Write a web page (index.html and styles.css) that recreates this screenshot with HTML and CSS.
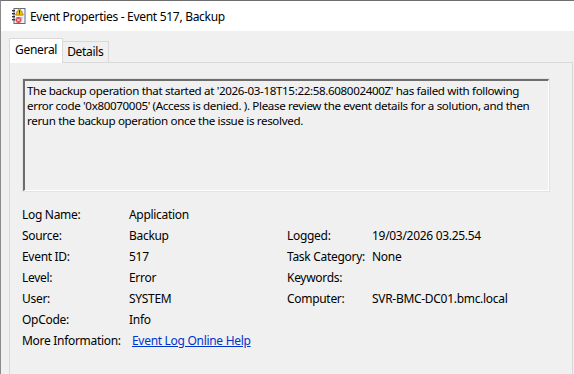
FILE: index.html
```html
<!DOCTYPE html>
<html lang="en">
<head>
  <meta charset="UTF-8" />
  <title>Event Properties - Event 517, Backup</title>
  <link rel="stylesheet" href="styles.css">
</head>
<body>
  <div class="window">
    <div class="titlebar">
      <svg class="app-icon" width="16" height="18" viewBox="0 0 16 18">
        <rect x="3" y="1.5" width="11" height="15" fill="#f4f4f8" stroke="#5a6a8a" />
        <line x1="5" y1="5" x2="12" y2="5" stroke="#9aa6c0" />
        <line x1="5" y1="8" x2="12" y2="8" stroke="#9aa6c0" />
        <line x1="5" y1="11" x2="12" y2="11" stroke="#9aa6c0" />
        <rect x="1" y="3" width="3" height="1.4" fill="#333" />
        <rect x="1" y="6" width="3" height="1.4" fill="#333" />
        <rect x="1" y="9" width="3" height="1.4" fill="#333" />
        <rect x="1" y="12" width="3" height="1.4" fill="#333" />
        <polygon points="8.5,1 12.5,8 4.5,8" fill="#f2c200" stroke="#a07800" stroke-width="0.6" />
        <rect x="8" y="3.2" width="1" height="2.6" fill="#222" />
        <rect x="8" y="6.3" width="1" height="1" fill="#222" />
        <circle cx="7.5" cy="13" r="3" fill="#d9434e" />
        <line x1="6" y1="11.5" x2="9" y2="14.5" stroke="#fff" stroke-width="1" />
        <line x1="9" y1="11.5" x2="6" y2="14.5" stroke="#fff" stroke-width="1" />
      </svg>
      <span class="title">Event Properties - Event 517, Backup</span>
    </div>

    <div class="body">
      <div class="tabs">
        <div class="tab active">General</div>
        <div class="tab">Details</div>
      </div>

      <div class="panel">
        <div class="message">The backup operation that started at '2026-03-18T15:22:58.608002400Z' has failed with following error code '0x80070005' (Access is denied. ). Please review the event details for a solution, and then rerun the backup operation once the issue is resolved.</div>

        <div class="props">
          <div class="label">Log Name:</div>
          <div class="value wide">Application</div>

          <div class="label">Source:</div>
          <div class="value">Backup</div>
          <div class="label">Logged:</div>
          <div class="value">19/03/2026 03.25.54</div>

          <div class="label">Event ID:</div>
          <div class="value">517</div>
          <div class="label">Task Category:</div>
          <div class="value">None</div>

          <div class="label">Level:</div>
          <div class="value">Error</div>
          <div class="label">Keywords:</div>
          <div class="value"></div>

          <div class="label">User:</div>
          <div class="value">SYSTEM</div>
          <div class="label">Computer:</div>
          <div class="value">SVR-BMC-DC01.bmc.local</div>

          <div class="label">OpCode:</div>
          <div class="value wide">Info</div>

          <div class="label">More Information:</div>
          <div class="value wide"><a class="link" href="#">Event Log Online Help</a></div>
        </div>
      </div>
    </div>
  </div>
</body>
</html>
```

FILE: styles.css
```css
* { box-sizing: border-box; }
body {
  margin: 0;
  background: #f0f0f0;
  font-family: 'Noto Sans', 'Open Sans', sans-serif;
  font-size: 12px;
  letter-spacing: -0.3px;
  color: #000;
  overflow: hidden;
}
.window {
  height: 374px;
  border-top: 1px solid #6f6f6f;
  border-left: 1px solid #8a8a8a;
  background: #f0f0f0;
}
.titlebar {
  height: 30px;
  background: #fff;
  display: flex;
  align-items: center;
  padding-left: 10px;
  gap: 3px;
}
.title {
  font-size: 12px;
  letter-spacing: -0.3px;
}
.body {
  padding: 7px 0 0 8px;
}
.tabs {
  display: flex;
  align-items: flex-end;
  height: 24px;
}
.tab {
  height: 21px;
  padding: 0 4px;
  border: 1px solid #d9d9d9;
  border-bottom: none;
  background: #f0f0f0;
  line-height: 19px;
  margin-left: -1px;
}
.tab.active {
  height: 25px;
  margin-bottom: -1px;
  margin-left: 0;
  padding: 0 5px;
  background: #fff;
  line-height: 21px;
  position: relative;
  z-index: 1;
}
.panel {
  width: 564px;
  height: 320px;
  border: 1px solid #d9d9d9;
  border-bottom: none;
  background: #f0f0f0;
  padding: 16px 0 0 13px;
}
.message {
  width: 526px;
  height: 112px;
  border-top: 2px solid #6d6d6d;
  border-left: 2px solid #6d6d6d;
  border-right: 1px solid #fff;
  border-bottom: 1px solid #fff;
  outline: 1px solid #e3e3e3;
  padding: 2px 2px 0;
  font-size: 11.6px;
  line-height: 15px;
  letter-spacing: -0.35px;
}
.props {
  margin-top: 13px;
  margin-left: -1px;
  display: grid;
  grid-template-columns: 107px 158px 85px auto;
  grid-auto-rows: 21px;
  line-height: 21px;
}
.value.wide {
  grid-column: 2 / 5;
}
.link {
  color: #0033cc;
  text-decoration: underline;
  margin-left: 3px;
}
```
